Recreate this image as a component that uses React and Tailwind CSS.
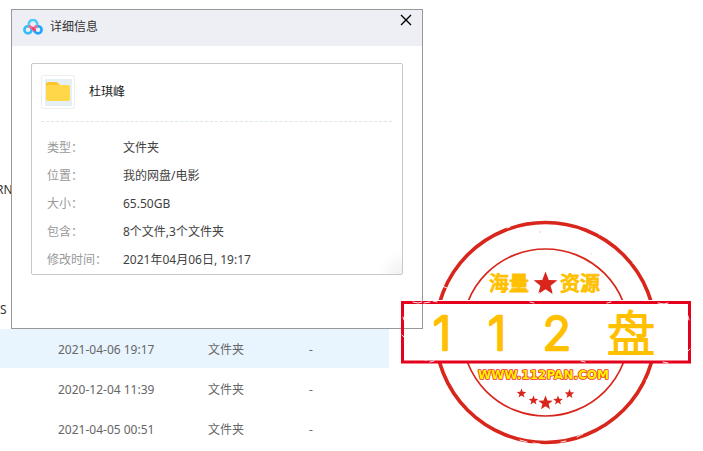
import React from 'react';

const files = [
  { name: 'RN', date: '', type: '', size: '' },
  { name: '', date: '', type: '', size: '' },
  { name: '', date: '', type: '', size: '' },
  { name: 'S', date: '', type: '', size: '' },
  { name: '', date: '2021-04-06 19:17', type: '文件夹', size: '-', selected: true },
  { name: '', date: '2020-12-04 11:39', type: '文件夹', size: '-' },
  { name: '', date: '2021-04-05 00:51', type: '文件夹', size: '-' },
];

const details = [
  ['类型：', '文件夹'],
  ['位置：', '我的网盘/电影'],
  ['大小：', '65.50GB'],
  ['包含：', '8个文件,3个文件夹'],
  ['修改时间：', '2021年04月06日, 19:17'],
];

function CloudLogo() {
  return (
    <svg className="w-5 h-4" viewBox="0 0 20 16" fill="none" strokeWidth="2.6">
      <circle cx="5" cy="10.8" r="3.6" stroke="#35bdf8" />
      <circle cx="15" cy="10.8" r="3.6" stroke="#1ba6fb" />
      <path d="M5.9 6A4.2 4.2 0 1 1 14.1 6" stroke="#4ccbfb" />
      <path d="M6.2 6.4Q7.4 9 10 9T13.8 6.4" stroke="#f7708c" />
      <path d="M8.6 9.4Q10.4 9 12 12.2" stroke="#f4466c" />
    </svg>
  );
}

function FolderIcon() {
  return (
    <svg className="w-[27px] h-[27px] bg-[#e6eff3]" viewBox="0 0 27 27">
      <path d="M1 5q0-2 2-2h8q1 0 2 1l2 2v6H1z" fill="#fdc52d" />
      <rect x="1" y="6" width="24" height="16" rx="2" fill="#ffd749" />
    </svg>
  );
}

function FileTable() {
  return (
    <table className="mt-[169px] w-[389px] table-fixed border-separate border-spacing-0 text-left text-[#666]">
      <colgroup>
        <col className="w-[58px]" />
        <col className="w-[150px]" />
        <col className="w-[101px]" />
        <col />
      </colgroup>
      <tbody>
        {files.map((file, i) => (
          <tr key={i} className={file.selected ? 'bg-[#e8f5fe]' : ''}>
            <td className={`h-10 border-b border-white p-0 pt-0.5 text-[#333] ${file.name === 'RN' ? '-indent-1' : ''}`}>{file.name}</td>
            <td className="h-10 border-b border-white p-0 pt-0.5">{file.date}</td>
            <td className="h-10 border-b border-white p-0 pt-0.5">{file.type}</td>
            <td className="h-10 border-b border-white p-0 pt-0.5">{file.size}</td>
          </tr>
        ))}
      </tbody>
    </table>
  );
}

function DetailsDialog() {
  return (
    <section
      role="dialog"
      aria-labelledby="details-title"
      className="absolute left-[11px] top-[9px] w-[412px] border border-[#999] bg-white pb-[53px]"
    >
      <header className="flex h-9 items-start justify-between bg-[#eeeff5] pl-[11px] pr-2.5">
        <div className="flex h-[34px] items-center gap-[7px]">
          <CloudLogo />
          <h1 id="details-title" className="text-[#333]">详细信息</h1>
        </div>
        <button type="button" aria-label="关闭" className="mt-1 text-black">
          <svg className="w-3 h-3" viewBox="0 0 12 12" stroke="currentColor" strokeWidth="1.4">
            <path d="M1 1l10 10M11 1L1 11" />
          </svg>
        </button>
      </header>

      <div className="mx-[19px] mt-[17px] rounded-xs border border-[#c8c8c8] bg-[radial-gradient(circle_at_bottom_right,#f0f0f0,#ffffff_24px)] pl-[9px] pr-2.5 pt-[11px]">
        <div className="flex items-center gap-3.5 border-b border-dashed border-[#dbe6ec] pb-3">
          <div className="flex size-[34px] items-center justify-center rounded-xs border border-[#eee] bg-white">
            <FolderIcon />
          </div>
          <p className="text-[#222]">杜琪峰</p>
        </div>
        <dl className="mt-3 pl-1.5">
          {details.map(([label, value]) => (
            <div key={label} className="flex h-7 items-center">
              <dt className="w-[76px] text-[#999]">{label}</dt>
              <dd className="text-[#424242]">{value}</dd>
            </div>
          ))}
        </dl>
      </div>
    </section>
  );
}

const STAR = 'M0-10L2.6-3.3 9.5-3.1 4.1 1.3 5.9 8.1 0 4.2-5.9 8.1-4.1 1.3-9.5-3.1-2.6-3.3z';

const stars = [
  [121.5, 174.5, 0.5],
  [133.5, 181.5, 0.5],
  [145.5, 184, 0.76],
  [158, 181.5, 0.5],
  [169.5, 175, 0.5],
];

function Stamp() {
  return (
    <svg className="absolute left-[400px] top-[219px] w-[292px] h-[228px]" viewBox="0 0 292 228" fill="none">
      <defs>
        <clipPath id="ring">
          <path d="M0 0h292v81H0zM0 144h292v84H0z" />
        </clipPath>
      </defs>

      <g clipPath="url(#ring)" stroke="#d9261c">
        <circle cx="145.5" cy="113.5" r="110" strokeWidth="3.6" />
        <circle cx="145.5" cy="113.5" r="83.5" strokeWidth="1.7" />
      </g>
      <rect x="2.5" y="83.5" width="287" height="59.5" stroke="#e5001c" strokeWidth="3" />

      {/* worn ink */}
      <g stroke="#fff" strokeWidth="0.9" strokeLinecap="round">
        <path d="M107 9l3-1M42 67l5 2M224 32l2-2M200 16l1-1M233 44l2-1" />
        <path d="M13 83l5 1 4-1M24 84l6-1M33 82l4 1M130 83l4 1M207 84l4-1M258 84l6 1 4-1M3 98l1 3M2 116l2 2" />
        <path d="M25 141l6-1M30 143l4-1M181 142l4 1M263 143l5 1M288 97l1 4M288 132l2-2" />
        <path d="M120 221l7 2M133 224l7 1M161 223l5-1M177 218l6-3M246 161l3 2M213 167l2-2M230 188l2 1" />
      </g>
      <g stroke="#f3b3af" strokeWidth="0.8">
        <path d="M139 13h2M115 190h1M75 62h1M191 35h1" />
      </g>

      <g fill="#ffc000" stroke="#ffc000" strokeWidth="0.9" strokeLinejoin="round" fontSize="20" fontWeight="500">
        <text x="89" y="72">海量</text>
        <text x="160" y="72">资源</text>
      </g>
      <path d={STAR} transform="translate(145.5 65) scale(1.25)" fill="#d9261c" />
      <path d="M138 75l2-2M152 74l2 1" stroke="#fff" strokeWidth="0.8" />

      <g fill="#ffc000" stroke="#ffc000" strokeLinejoin="round" textAnchor="middle">
        <g fontFamily="Inter, sans-serif" fontSize="47" fontWeight="300" strokeWidth="2.4">
          <text x="42" y="131">1</text>
          <text x="97" y="131">1</text>
          <text x="157" y="131">2</text>
        </g>
        <text x="231" y="132" fontSize="48" fontWeight="300" strokeWidth="2">盘</text>
      </g>

      <text
        x="143.5"
        y="160"
        fontFamily="DejaVu Sans, sans-serif"
        fontSize="12"
        fontWeight="700"
        textAnchor="middle"
        fill="#fff100"
        stroke="#f0321c"
        strokeWidth="1.6"
        strokeLinejoin="round"
        paintOrder="stroke"
      >
        WWW.112PAN.COM
      </text>

      {stars.map(([x, y, s]) => (
        <path key={x} d={STAR} transform={`translate(${x} ${y}) scale(${s})`} fill="#d9261c" />
      ))}
    </svg>
  );
}

export default function App() {
  return (
    <main className="relative flow-root min-h-screen overflow-hidden bg-white font-['Noto_Sans','Noto_Sans_CJK_SC',sans-serif] text-xs">
      <FileTable />
      <DetailsDialog />
      <Stamp />
    </main>
  );
}
